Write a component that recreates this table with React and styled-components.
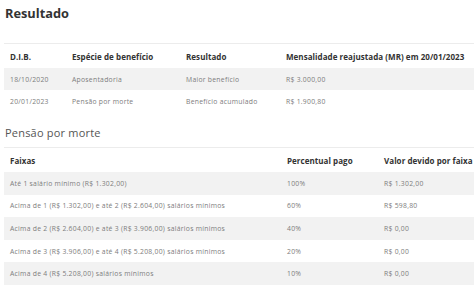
import React from 'react';
import styled, { createGlobalStyle } from 'styled-components';

const GlobalStyle = createGlobalStyle`
  body {
    margin: 0;
    background: #fff;
    font-family: "Open Sans", "DejaVu Sans", sans-serif;
  }
`;

const resumo = [
  { dib: '18/10/2020', especie: 'Aposentadoria', resultado: 'Maior benefício', mr: 'R$ 3.000,00' },
  { dib: '20/01/2023', especie: 'Pensão por morte', resultado: 'Benefício acumulado', mr: 'R$ 1.900,80' },
];

const faixas = [
  { faixa: 'Até 1 salário mínimo (R$ 1.302,00)', pct: '100%', valor: 'R$ 1.302,00' },
  { faixa: 'Acima de 1 (R$ 1.302,00) e até 2 (R$ 2.604,00) salários mínimos', pct: '60%', valor: 'R$ 598,80' },
  { faixa: 'Acima de 2 (R$ 2.604,00) e até 3 (R$ 3.906,00) salários mínimos', pct: '40%', valor: 'R$ 0,00' },
  { faixa: 'Acima de 3 (R$ 3.906,00) e até 4 (R$ 5.208,00) salários mínimos', pct: '20%', valor: 'R$ 0,00' },
  { faixa: 'Acima de 4 (R$ 5.208,00) salários mínimos', pct: '10%', valor: 'R$ 0,00' },
];

const App = () => {
  return (
    <Page>
      <GlobalStyle />
      <Title>Resultado</Title>
      <Table>
        <colgroup>
          <col style={{ width: 62 }} />
          <col style={{ width: 114 }} />
          <col style={{ width: 100 }} />
          <col />
        </colgroup>
        <thead>
          <tr>
            <Th>D.I.B.</Th>
            <Th>Espécie de benefício</Th>
            <Th>Resultado</Th>
            <Th>Mensalidade reajustada (MR) em 20/01/2023</Th>
          </tr>
        </thead>
        <tbody>
          {resumo.map((r, i) => (
            <Row key={r.dib} $striped={i % 2 === 0}>
              <Td>{r.dib}</Td>
              <Td>{r.especie}</Td>
              <Td>{r.resultado}</Td>
              <Td>{r.mr}</Td>
            </Row>
          ))}
        </tbody>
      </Table>

      <Subtitle>Pensão por morte</Subtitle>
      <Table>
        <colgroup>
          <col style={{ width: 277 }} />
          <col style={{ width: 97 }} />
          <col />
        </colgroup>
        <thead>
          <tr>
            <Th>Faixas</Th>
            <Th>Percentual pago</Th>
            <Th>Valor devido por faixa</Th>
          </tr>
        </thead>
        <tbody>
          {faixas.map((f, i) => (
            <Row key={f.faixa} $striped={i % 2 === 0} $tall>
              <Td>{f.faixa}</Td>
              <Td>{f.pct}</Td>
              <Td>{f.valor}</Td>
            </Row>
          ))}
        </tbody>
      </Table>
    </Page>
  );
};

const Page = styled.div`
  width: 474px;
  height: 296px;
  overflow: hidden;
  padding: 0 0 0 4px;
  box-sizing: border-box;
`;

const Title = styled.h2`
  margin: 0;
  padding: 4px 0 0 1px;
  font-size: 12.8px;
  font-weight: 700;
  color: #333;
  line-height: 18px;
  height: 43px;
  box-sizing: border-box;
`;

const Subtitle = styled.h3`
  margin: 0;
  padding: 12px 0 0 1px;
  font-size: 11px;
  font-weight: 400;
  color: #555;
  line-height: 17px;
  height: 35px;
  box-sizing: border-box;
  letter-spacing: 0.2px;
`;

const Table = styled.table`
  width: 500px;
  border-collapse: collapse;
  table-layout: fixed;
  border-top: 1px solid #ececec;
`;

const Th = styled.th`
  text-align: left;
  font-size: 8px;
  font-weight: 700;
  color: #333;
  height: 24px;
  padding: 0 6px;
  white-space: nowrap;
  letter-spacing: 0.05px;
`;

const Row = styled.tr`
  background: ${(p) => (p.$striped ? '#f2f2f2' : '#fff')};
  height: ${(p) => (p.$tall ? '22.6px' : '22px')};
`;

const Td = styled.td`
  font-size: 6.8px;
  color: #7d7d7d;
  padding: 0 6px;
  white-space: nowrap;
  letter-spacing: 0.27px;
`;

export default App;
